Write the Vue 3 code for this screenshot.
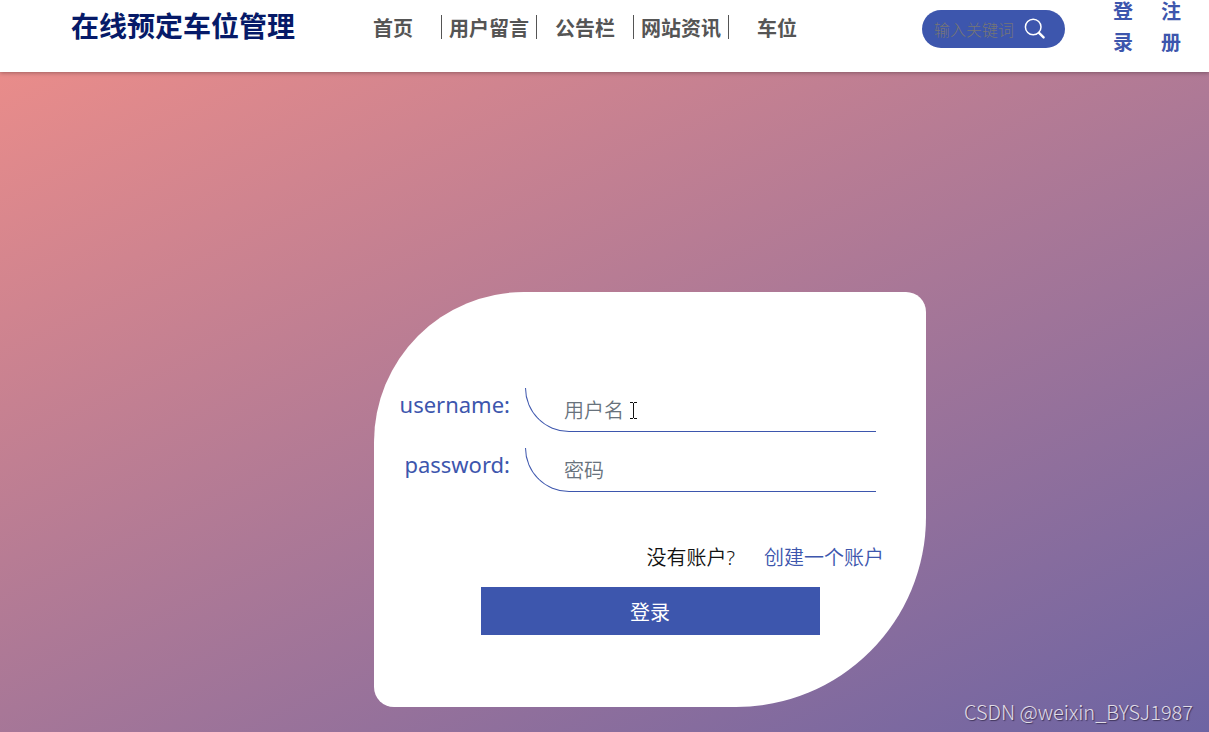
<script setup>
import { ref } from 'vue'

const links = ['首页', '用户留言', '公告栏', '网站资讯', '车位']
const keyword = ref('')
const username = ref('')
const password = ref('')
</script>

<template>
  <div class="page">
    <header class="topbar">
      <h1 class="brand">在线预定车位管理</h1>
      <nav class="nav">
        <a v-for="link in links" :key="link" href="#" class="nav-link">{{ link }}</a>
      </nav>
      <form class="search" @submit.prevent>
        <input v-model="keyword" type="text" aria-label="输入关键词" placeholder="输入关键词" />
        <button type="submit" aria-label="搜索">
          <svg viewBox="0 0 22 22" width="22" height="22" fill="none" stroke="#fff" stroke-width="1.5" stroke-linecap="round">
            <circle cx="9.2" cy="9" r="7.8" />
            <path d="M15 14.8 19.6 19.4" stroke-width="2.4" />
          </svg>
        </button>
      </form>
      <div class="account">
        <a href="#">登录</a>
        <a href="#">注册</a>
      </div>
    </header>
    <main class="main">
      <form class="card" @submit.prevent>
        <div class="field">
          <label for="username">username:</label>
          <input id="username" v-model="username" type="text" placeholder="用户名" />
        </div>
        <div class="field">
          <label for="password">password:</label>
          <input id="password" v-model="password" type="password" placeholder="密码" />
        </div>
        <p class="signup"><span>没有账户?</span><a href="#">创建一个账户</a></p>
        <button class="submit" type="submit">登录</button>
        <svg class="cursor" viewBox="0 0 7 17" width="7" height="17" fill="none" stroke="#111" aria-hidden="true">
          <path d="M0 0.5H3M4 0.5H7M3.5 1V16M0 16.5H3M4 16.5H7" />
        </svg>
      </form>
      <span class="watermark">CSDN @weixin_BYSJ1987</span>
    </main>
  </div>
</template>

<style>
body {
  margin: 0;
}
</style>

<style scoped>
.page {
  display: flex;
  flex-direction: column;
  min-height: 100vh;
  font-family: "Noto Sans", "Noto Sans CJK SC", sans-serif;
  font-size: 20px;
}
.page * {
  box-sizing: border-box;
}
.page input,
.page button {
  font-family: inherit;
}
.page a {
  text-decoration: none;
}
.topbar {
  position: relative;
  z-index: 1;
  display: flex;
  align-items: flex-start;
  min-height: 72px;
  padding-left: 71px;
  padding-right: 28px;
  background: #fff;
  box-shadow: 0 1px 4px rgba(0, 0, 0, 0.3);
}
.brand {
  margin: 5px 0 0;
  width: 274px;
  font-size: 28px;
  line-height: 42px;
  color: #061a68;
  white-space: nowrap;
}
.nav {
  display: flex;
  margin-top: 15px;
}
.nav-link {
  width: 96px;
  height: 24px;
  line-height: 28px;
  text-align: center;
  font-weight: 700;
  color: #555;
  white-space: nowrap;
}
.nav-link:nth-child(even) {
  border-left: 1px solid #555;
  border-right: 1px solid #555;
}
.search {
  display: flex;
  align-items: center;
  width: 143px;
  height: 38px;
  margin-top: 10px;
  margin-left: auto;
  padding: 0 12px;
  border-radius: 19px;
  background: #3d56ad;
}
.search input {
  width: 90px;
  padding: 2px 0 0;
  border: 0;
  outline: 0;
  background: transparent;
  color: #fff;
  font-size: 16px;
  font-weight: 300;
}
.search input::placeholder {
  color: #757575;
}
.search button {
  display: flex;
  flex-shrink: 0;
  padding: 0;
  border: 0;
  background: none;
}
.account {
  display: flex;
  gap: 28px;
  margin-left: 48px;
  margin-top: -4px;
}
.account a {
  width: 20px;
  line-height: 31px;
  font-weight: 700;
  color: #3d56ad;
}
.main {
  position: relative;
  flex: 1;
  padding: 220px 0 25px 91px;
  background: linear-gradient(155deg, #e98c8a, #6d64a3);
}
.card {
  position: relative;
  display: flex;
  flex-direction: column;
  max-width: 552px;
  margin: 0 auto;
  padding: 96px 0 72px;
  border-radius: 150px 20px 190px 20px;
  background: #fff;
}
.field {
  display: flex;
  gap: 15px;
  margin-bottom: 16px;
  padding-right: 50px;
}
.field label {
  width: 136px;
  font-size: 22px;
  line-height: 32px;
  text-align: right;
  color: #3d56ad;
}
.field input {
  flex: 1;
  min-width: 0;
  height: 44px;
  padding: 2px 0 0 38px;
  border: 0;
  border-left: 1px solid #3d56ad;
  border-bottom: 1px solid #3d56ad;
  border-radius: 0 0 0 44px;
  outline: 0;
  background: transparent;
  font-size: 20px;
  font-weight: 350;
}
.field input::placeholder {
  color: #68727c;
}
.signup {
  display: flex;
  justify-content: flex-end;
  gap: 29px;
  margin: 35px 42px 14px 0;
  line-height: 30px;
  font-weight: 350;
  color: #111;
}
.signup a {
  color: #3d56ad;
}
.submit {
  align-self: center;
  width: 339px;
  height: 48px;
  padding: 0;
  border: 0;
  background: #3d56ad;
  color: #fff;
  font-size: 20px;
}
.cursor {
  position: absolute;
  left: 256px;
  top: 110px;
}
.watermark {
  position: absolute;
  right: 16px;
  bottom: 5px;
  font-family: "Noto Sans CJK SC", sans-serif;
  font-weight: 300;
  font-size: 20px;
  line-height: 30px;
  color: #e0dce6;
  text-shadow: 1px 1px 1px rgba(40, 30, 60, 0.7);
}
</style>
